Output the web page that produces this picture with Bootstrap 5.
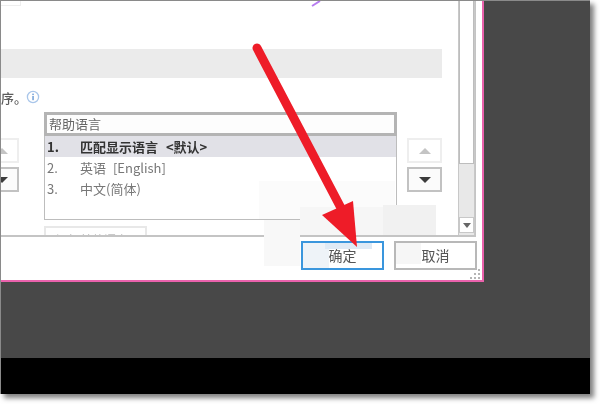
<!DOCTYPE html>
<html lang="zh-CN">
<head>
<meta charset="utf-8">
<title>帮助语言</title>
<link href="https://cdn.jsdelivr.net/npm/bootstrap@5.3.0/dist/css/bootstrap.min.css" rel="stylesheet">
<style>
html,body{margin:0;background:#fff;overflow:hidden;height:404px}
body{font-family:"Noto Sans CJK SC","Noto Sans",sans-serif;font-size:13px}
.shot{width:590px;height:394px;border:1px solid #8a8a8a;border-width:1px 0 0 1px;box-shadow:4px 4px 5px rgba(0,0,0,.5);position:relative;overflow:hidden;background:#484848}
.blurwrap{filter:blur(.5px);height:100%}
.stage{height:357px;background:#484848}
.strip{height:36px;background:#000}
.dlg{width:483px;height:281px;background:#fff;border-right:2px solid #ea62ac;border-bottom:2px solid #ea62ac;position:relative}
.panel{width:475px;height:236px;border-right:1px solid #c4c4c4;border-bottom:2px solid #c4c4c4;overflow:hidden}
.content{width:457px}
.topgap{height:48px}
.greybar{height:29px;width:441px;background:#ebebeb}
.hint{height:34px;color:#5c5c5c;font-size:13px;font-weight:500;line-height:1;padding-top:4px}
.hintcut{width:26px;white-space:nowrap}
.hinticon{margin-left:-1px}
.lefthold{width:18px;overflow:hidden;padding-top:26px}
.arrowbtn{width:35px;height:25px;padding:0;border-radius:0;background:#fff;display:flex;align-items:center;justify-content:center}
.arrowbtn.off{border:2px solid #eee}
.arrowbtn.on{border:2px solid #c2c2c2;background:#fbfbfb}
.tri{width:0;height:0;border-left:6px solid transparent;border-right:6px solid transparent}
.tri.up{border-bottom:6px solid #c4c4c4}
.tri.dn{border-top:6px solid #3c3c3c}
.leftmove{margin-left:-17px}
.listbox{width:353px;height:108px;margin-left:25px;border:1px solid #bdbdbd;border-top:0;border-radius:0;background:#fff}
.listhead{height:24px;border:3px solid #b4b4b4;margin:0 -1px;padding:0 0 0 2px;color:#666;font-size:13px;line-height:18px;background:#fdfdfd;border-radius:0}
.lang{height:21px;border:0;border-radius:0;padding:0 0 0 2px;color:#777;font-size:13px;line-height:21px;background:transparent;word-spacing:4px}
.lang.sel{background:#e1e1e7;color:#333;font-weight:700;word-spacing:5px}
.num{width:33px;display:inline-block}
.rightcol{width:35px;margin-left:10px;padding-top:26px}
.clipbtn{margin:6px 0 0 43px;width:103px;height:20px;border:2px solid #e8e8e8;color:#bbb;font-size:12px;line-height:16px;padding:4px 0 0 10px;border-radius:0;background:#fff;text-align:left}
.scroller{width:17px;background:#e8e8e8;border-left:1px solid #c8c8c8;border-right:1px solid #c8c8c8;height:100%}
.thumb{height:163px;background:#fff;border:1px solid #bdbdbd;border-top:0}
.scrolldn{height:16px;width:15px;margin-top:53px;background:#fff;border:1px solid #c8c8c8;display:flex;align-items:center;justify-content:center}
.tri.sm{border-left-width:4px;border-right-width:4px;border-top:5px solid #666}
.foot{height:43px;padding:4px 0 0 300px}
.dbtn{width:83px;height:29px;padding:0;border-radius:0;font-size:14px;line-height:25px;color:#555;background:#fff;flex:none}
.dbtn.pri{border:2px solid #3a96dd}
.dbtn.sec{border:2px solid #b8b8b8;margin-left:10px}
.overlay{position:absolute;left:-1px;top:-1px;width:600px;height:404px}
.tabbit{position:absolute;left:-1px;top:-1px;width:21px;height:6px;border:1px solid #eee}
.grip{position:absolute;right:1px;bottom:0}
</style>
</head>
<body>
<div class="shot">
  <div class="blurwrap">
  <div class="stage">
    <div class="dlg">
      <div class="panel d-flex">
        <div class="content">
          <div class="topgap"></div>
          <div class="greybar"></div>
          <div class="hint d-flex align-items-center">
            <span class="hintcut">序。</span>
            <svg class="hinticon" width="14" height="14" viewBox="0 0 14 14"><circle cx="7" cy="7" r="5.6" fill="none" stroke="#a9c6ea" stroke-width="1.3"/><rect x="6.3" y="6" width="1.5" height="4.2" fill="#6f9fd8"/><rect x="6.3" y="3.6" width="1.5" height="1.5" fill="#6f9fd8"/></svg>
          </div>
          <div class="d-flex">
            <div class="lefthold">
              <div class="d-flex flex-column gap-1 leftmove">
                <button class="btn arrowbtn off" type="button"><span class="tri up"></span></button>
                <button class="btn arrowbtn on" type="button"><span class="tri dn"></span></button>
              </div>
            </div>
            <div class="list-group listbox">
              <div class="list-group-item listhead">帮助语言</div>
              <div class="list-group-item lang sel"><span class="num">1.</span>匹配显示语言 &lt;默认&gt;</div>
              <div class="list-group-item lang"><span class="num">2.</span>英语 [English]</div>
              <div class="list-group-item lang"><span class="num">3.</span>中文(简体)</div>
            </div>
            <div class="rightcol d-flex flex-column gap-1">
              <button class="btn arrowbtn off" type="button"><span class="tri up"></span></button>
              <button class="btn arrowbtn on" type="button"><span class="tri dn"></span></button>
            </div>
          </div>
          <div class="clipbtn">添加其他语言</div>
        </div>
        <div class="scroller">
          <div class="thumb"></div>
          <div class="scrolldn"><span class="tri sm"></span></div>
        </div>
      </div>
      <div class="foot d-flex">
        <button class="btn dbtn pri" type="button">确定</button>
        <button class="btn dbtn sec" type="button">取消</button>
      </div>
      <svg class="grip" width="11" height="11" viewBox="0 0 11 11" fill="#b5b5b5"><rect x="8" y="0" width="2" height="2"/><rect x="4" y="4" width="2" height="2"/><rect x="8" y="4" width="2" height="2"/><rect x="0" y="8" width="2" height="2"/><rect x="4" y="8" width="2" height="2"/><rect x="8" y="8" width="2" height="2"/></svg>
      <div class="tabbit"></div>
    </div>
  </div>
  <div class="strip"></div>
  </div>
  <svg class="overlay" viewBox="0 0 600 404">
    <g>
      <rect x="259" y="181" width="136" height="38" fill="#fbfbfb"/>
      <rect x="383" y="205" width="53" height="30" fill="#f1f1f1"/>
      <rect x="300" y="207" width="83" height="28" fill="#f6f6f6"/>
      <rect x="264" y="220" width="36" height="46" fill="#f8f8f8"/>
      <rect x="303" y="243" width="26" height="25" fill="#eef3f8"/>
      <rect x="325" y="243" width="47" height="6" fill="#dfeaf5"/>
      <rect x="396" y="243" width="25" height="21" fill="#f6f6f6"/>
    </g>
    <path d="M312 6L320 1" stroke="#b77cf0" stroke-width="2" fill="none"/>
    <path d="M257 48L341 208" stroke="#ee1c28" stroke-width="9" stroke-linecap="round" fill="none"/>
    <polygon points="353,201 357,247 322,215" fill="#ee1c28"/>
  </svg>
</div>
<script src="https://cdn.jsdelivr.net/npm/bootstrap@5.3.0/dist/js/bootstrap.bundle.min.js"></script>
</body>
</html>
